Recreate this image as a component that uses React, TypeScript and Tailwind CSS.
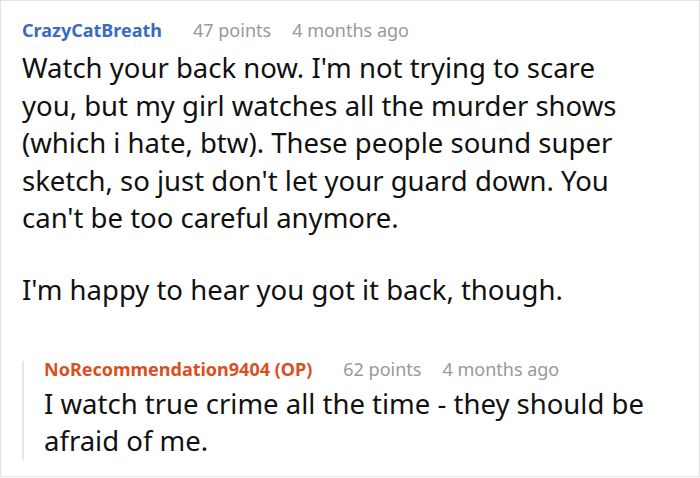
export default function App() {
  return (
    <div className="h-[478px] w-[700px] overflow-hidden bg-white" style={{ fontFamily: '"Noto Sans", sans-serif' }}>
      <div className="h-[477px] border border-[#e2e2e2] pl-[21px] pr-[44px] pt-[17px]">
        <div className="flex items-baseline text-[18px] leading-[24px]">
          <span className="font-bold text-[#3a6bc2]">CrazyCatBreath</span>
          <span className="ml-[31px] text-[#999999]">47 points</span>
          <span className="ml-[21px] text-[#999999]">4 months ago</span>
        </div>
        <div className="mt-[7px] text-[27.5px] leading-[37.5px] text-[#111111]">
          <p>
            Watch your back now. I'm not trying to scare you, but my girl watches all the murder shows (which i hate,
            btw). These people sound super sketch, so just don't let your guard down. You can't be too careful anymore.
          </p>
          <p className="mt-[34.5px]">I'm happy to hear you got it back, though.</p>
        </div>
        <div className="mt-[58px] border-l-2 border-[#e6e6e6] pl-[20px]">
          <div className="-mt-[6px] flex items-baseline text-[18px] leading-[16px]">
            <span className="font-bold text-[#d9501e]">NoRecommendation9404 (OP)</span>
            <span className="ml-[31px] text-[#999999]">62 points</span>
            <span className="ml-[21px] text-[#999999]">4 months ago</span>
          </div>
          <p className="-mb-[2px] mt-[8px] text-[27.5px] leading-[37.5px] text-[#111111]">
            I watch true crime all the time - they should be afraid of me.
          </p>
        </div>
      </div>
    </div>
  )
}
